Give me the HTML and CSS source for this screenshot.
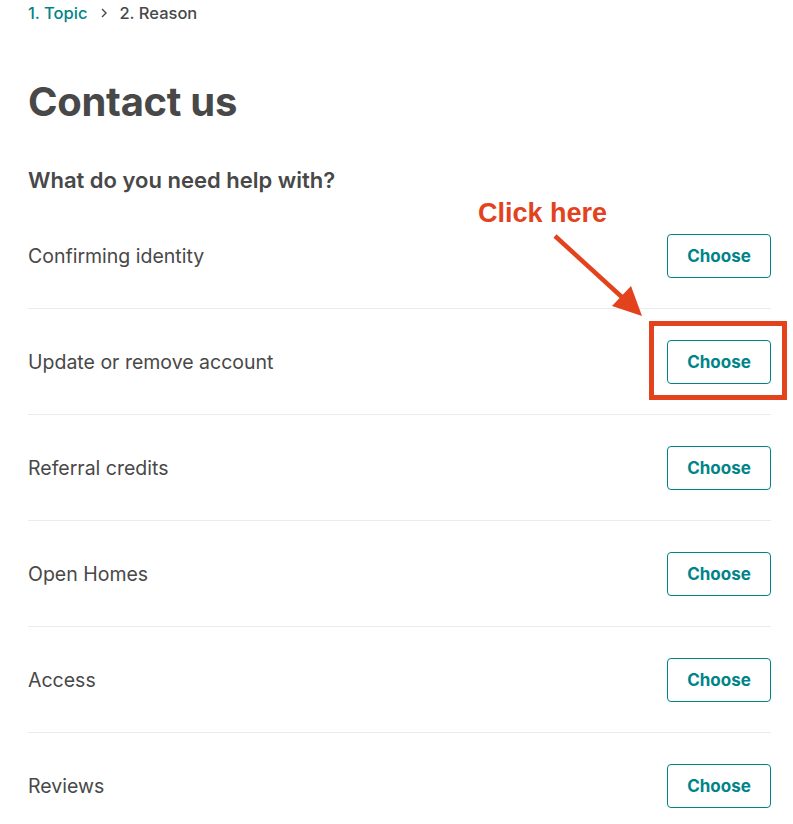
FILE: index.html
```html
<!DOCTYPE html>
<html lang="en">
<head>
<meta charset="utf-8">
<title>Contact us</title>
<link rel="stylesheet" href="styles.css">
</head>
<body>
<main class="page">
  <nav class="breadcrumb">
    <a class="crumb crumb-link" href="#">1. Topic</a>
    <svg class="crumb-sep" viewBox="0 0 10 12" width="10" height="12" aria-hidden="true"><path d="M3 2 L7 6 L3 10" fill="none" stroke="#484848" stroke-width="1.4"/></svg>
    <span class="crumb">2. Reason</span>
  </nav>
  <h1 class="title">Contact us</h1>
  <h2 class="subtitle">What do you need help with?</h2>
  <ul class="options">
    <li class="option"><span class="option-label">Confirming identity</span><button class="choose">Choose</button></li>
    <li class="option"><span class="option-label">Update or remove account</span><button class="choose">Choose</button></li>
    <li class="option"><span class="option-label">Referral credits</span><button class="choose">Choose</button></li>
    <li class="option"><span class="option-label">Open Homes</span><button class="choose">Choose</button></li>
    <li class="option"><span class="option-label">Access</span><button class="choose">Choose</button></li>
    <li class="option"><span class="option-label">Reviews</span><button class="choose">Choose</button></li>
  </ul>
</main>
<div class="annotation">
  <span class="annotation-text">Click here</span>
  <svg class="annotation-arrow" width="793" height="824" viewBox="0 0 793 824" aria-hidden="true">
    <line x1="555" y1="236" x2="624" y2="299" stroke="#e2431d" stroke-width="4.5"/>
    <polygon points="642,316 612,306 631,286" fill="#e2431d"/>
    <rect x="651.5" y="323.5" width="133" height="74" fill="none" stroke="#e2431d" stroke-width="5"/>
  </svg>
</div>
</body>
</html>
```
FILE: styles.css
```css
html, body {
  margin: 0;
  padding: 0;
  background: #ffffff;
}
body {
  font-family: "Inter", "Roboto", "Liberation Sans", sans-serif;
  color: #484848;
  position: relative;
  width: 793px;
  height: 824px;
  overflow: hidden;
}
.page {
  padding: 3px 22px 0 28px;
}
.breadcrumb {
  display: flex;
  align-items: center;
  height: 20px;
  font-size: 16.5px;
  font-weight: 500;
}
.crumb {
  color: #484848;
  text-decoration: none;
}
.crumb-link {
  color: #008489;
}
.crumb-sep {
  margin: 0 10px 0 12px;
}
.title {
  margin: 55px 0 0;
  font-size: 40px;
  line-height: 48px;
  font-weight: 700;
  letter-spacing: -0.3px;
}
.subtitle {
  margin: 40px 0 0;
  font-size: 22px;
  line-height: 28px;
  font-weight: 600;
}
.options {
  list-style: none;
  margin: 9px 0 0;
  padding: 0;
}
.option {
  display: flex;
  align-items: center;
  justify-content: space-between;
  padding: 31px 0 30px;
  border-bottom: 1px solid #ebebeb;
}
.option-label {
  font-size: 19.5px;
  line-height: 24px;
  font-weight: 400;
}
.choose {
  width: 104px;
  height: 44px;
  border: 1px solid #008489;
  border-radius: 4px;
  background: #ffffff;
  color: #008489;
  font-family: inherit;
  font-size: 17px;
  font-weight: 700;
  padding: 0;
}
.annotation {
  position: absolute;
  left: 0;
  top: 0;
  width: 793px;
  height: 824px;
  pointer-events: none;
}
.annotation-text {
  position: absolute;
  left: 478px;
  top: 197px;
  font-family: "Liberation Sans", Arial, sans-serif;
  font-weight: 700;
  font-size: 27px;
  line-height: 32px;
  color: #e2431d;
}
.annotation-arrow {
  position: absolute;
  left: 0;
  top: 0;
}
```
